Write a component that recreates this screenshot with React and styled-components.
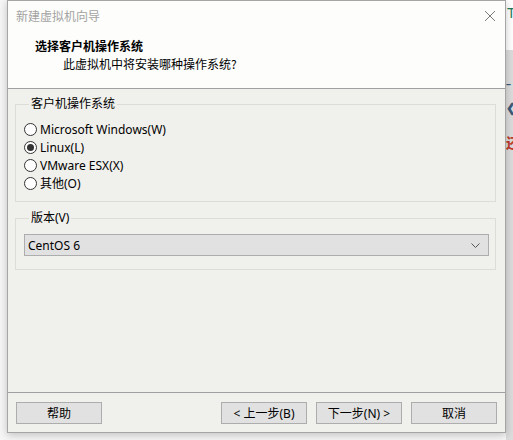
import React, { useState } from 'react';
import styled, { createGlobalStyle } from 'styled-components';

const GlobalStyle = createGlobalStyle`
    html, body {
        margin: 0;
        padding: 0;
        background: #f6f6f6;
    }
    * { box-sizing: border-box; }
`

const Desktop = styled.div`
    display: flex;
    width: 513px;
    height: 440px;
    overflow: hidden;
    background: #f6f6f6;
    font-family: "Noto Sans", "Noto Sans CJK SC", sans-serif;
    font-size: 12px;
    color: #000;
`
const LeftGap = styled.div`
    width: 7px;
    flex-shrink: 0;
`
const Window = styled.div`
    width: 499px;
    height: 433px;
    flex-shrink: 0;
    border: 1px solid #a5a5a5;
    background: #f0f0ec;
    box-shadow: 0 2px 8px rgba(0, 0, 0, 0.22);
    display: flex;
    flex-direction: column;
    position: relative;
    z-index: 1;
`
const Top = styled.div`
    height: 88px;
    background: #fdfdfb;
    border-bottom: 1px solid #a0a0a0;
    display: flex;
    flex-direction: column;
`
const TitleBar = styled.div`
    height: 29px;
    display: flex;
    align-items: center;
    justify-content: space-between;
    padding: 0 8px 0 8px;
`
const Title = styled.span`
    color: #a3a3a3;
    font-family: "Noto Sans CJK SC", sans-serif;
    font-size: 12px;
`
const Close = styled.div`
    width: 12px;
    height: 12px;
    display: flex;
    margin-right: 1px;
`
const Header = styled.div`
    display: flex;
    flex-direction: column;
    gap: 2px;
    padding-top: 8px;
`
const HeadTitle = styled.div`
    padding-left: 27px;
    font-family: "Noto Sans CJK SC", sans-serif;
    font-weight: bold;
    font-size: 12px;
    line-height: 16px;
`
const HeadSub = styled.div`
    padding-left: 55px;
    font-family: "Noto Sans CJK SC", sans-serif;
    font-size: 12px;
    line-height: 16px;
`
const Body = styled.div`
    flex: 1;
    display: flex;
    flex-direction: column;
    padding: 7px 9px 0 7px;
`
const Group = styled.fieldset`
    margin: ${p => p.$gap || 0}px 0 0 0;
    padding: 8px 6px ${p => p.$bottom}px 8px;
    border: 1px solid #dcdcd8;
    min-width: 0;
`
const Legend = styled.legend`
    padding: 0 2px;
    margin-left: 5px;
    line-height: 16px;
    font-family: "Noto Sans", "Noto Sans CJK SC", sans-serif;
`
const RadioList = styled.div`
    display: flex;
    flex-direction: column;
`
const RadioRow = styled.label`
    height: 18px;
    display: flex;
    align-items: center;
    gap: 3px;
    cursor: default;
`
const Circle = styled.span`
    width: 13px;
    height: 13px;
    border-radius: 50%;
    border: 1px solid #333;
    background: #fff;
    display: flex;
    align-items: center;
    justify-content: center;
    &::after {
        content: "";
        width: 7px;
        height: 7px;
        border-radius: 50%;
        background: ${p => (p.$on ? '#333' : 'transparent')};
    }
`
const Select = styled.div`
    height: 22px;
    border: 1px solid #adadad;
    background: #e1e1e1;
    display: flex;
    align-items: center;
    justify-content: space-between;
    padding: 0 8px 0 3px;
`
const Spacer = styled.div`
    flex: 1;
`
const Footer = styled.div`
    margin: 0 -9px 0 -7px;
    border-top: 1px solid #a0a0a0;
    padding: 9px 8px 8px 8px;
    display: flex;
    gap: 9px;
`
const Button = styled.button`
    width: 86px;
    height: 22px;
    border: 1px solid #adadad;
    background: #e1e1e1;
    padding: 0;
    font-family: "Noto Sans", "Noto Sans CJK SC", sans-serif;
    font-size: 12px;
    color: #000;
    margin-left: ${p => p.$push || 0}px;
`
const SideApp = styled.div`
    flex: 1;
    display: flex;
    flex-direction: column;
    background: #dcdcdc;
`
const SideTop = styled.div`
    height: 50px;
    background: #fff;
    color: #1f7a5c;
    padding: 5px 0 0 1px;
    font-family: "Liberation Sans", sans-serif;
    font-size: 14px;
`
const SideMark = styled.div`
    margin-top: ${p => p.$top}px;
    color: ${p => p.$color};
    font-size: ${p => p.$size}px;
    font-weight: bold;
    line-height: 1;
`

const options = ['Microsoft Windows(W)', 'Linux(L)', 'VMware ESX(X)', '其他(O)'];

const App = () => {
    const [picked, setPicked] = useState(1);

    return (
        <Desktop>
            <GlobalStyle />
            <LeftGap />
            <Window>
                <Top>
                    <TitleBar>
                        <Title>新建虚拟机向导</Title>
                        <Close>
                            <svg width="12" height="12" viewBox="0 0 12 12">
                                <path d="M1 1 L11 11 M11 1 L1 11" stroke="#7a7a7a" strokeWidth="1" fill="none" />
                            </svg>
                        </Close>
                    </TitleBar>
                    <Header>
                        <HeadTitle>选择客户机操作系统</HeadTitle>
                        <HeadSub>此虚拟机中将安装哪种操作系统?</HeadSub>
                    </Header>
                </Top>
                <Body>
                    <Group $bottom={9}>
                        <Legend>客户机操作系统</Legend>
                        <RadioList>
                            {options.map((o, i) => (
                                <RadioRow key={o} onClick={() => setPicked(i)}>
                                    <Circle $on={picked === i} />
                                    {o}
                                </RadioRow>
                            ))}
                        </RadioList>
                    </Group>
                    <Group $gap={8} $bottom={13}>
                        <Legend>版本(V)</Legend>
                        <Select>
                            <span>CentOS 6</span>
                            <svg width="9" height="5" viewBox="0 0 9 5">
                                <path d="M0.5 0.5 L4.5 4.5 L8.5 0.5" stroke="#555" strokeWidth="1" fill="none" />
                            </svg>
                        </Select>
                    </Group>
                    <Spacer />
                    <Footer>
                        <Button>帮助</Button>
                        <Button $push={110}>&lt; 上一步(B)</Button>
                        <Button>下一步(N) &gt;</Button>
                        <Button>取消</Button>
                    </Footer>
                </Body>
            </Window>
            <SideApp>
                <SideTop>T</SideTop>
                <SideMark $top={28} $color="#3c5a7a" $size={10}>–</SideMark>
                <SideMark $top={14} $color="#3c5a7a" $size={12}>❮</SideMark>
                <SideMark $top={22} $color="#c0392b" $size={14}>还</SideMark>
            </SideApp>
        </Desktop>
    );
};

export default App;
